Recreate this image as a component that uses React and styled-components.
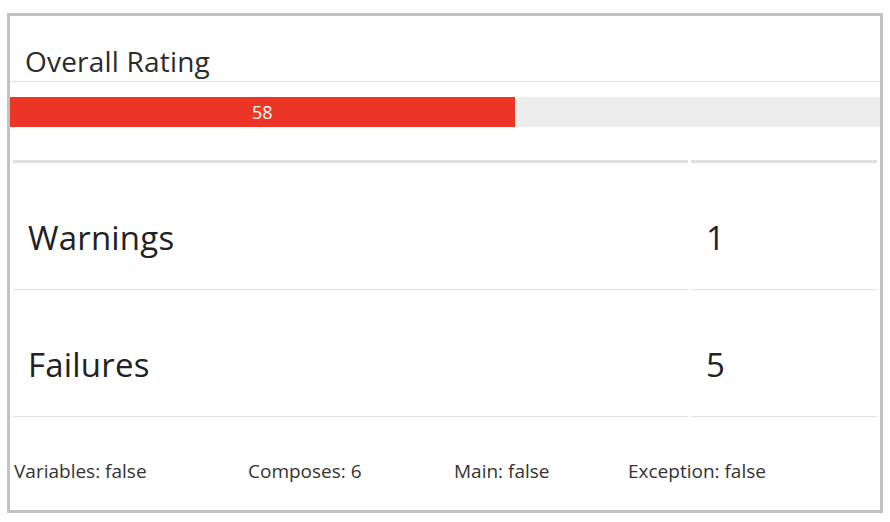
import React from "react";
import styled, { createGlobalStyle } from "styled-components";

const GlobalStyle = createGlobalStyle`
  html, body { margin: 0; padding: 0; background: #ffffff; }
  body { font-family: "Open Sans", "Noto Sans", "Liberation Sans", sans-serif; color: #222; }
`;

const Panel = styled.div`
  box-sizing: border-box;
  margin: 13px 7px 0 7px;
  width: 876px;
  height: 500px;
  border: 3px solid #c2c2c2;
  background: #fff;
  display: flex;
  flex-direction: column;
`;

const Header = styled.div`
  padding: 28px 0 3px 15px;
  border-bottom: 1px solid #dedede;
`;

const Title = styled.h2`
  margin: 0;
  font-size: 28px;
  line-height: 34px;
  font-weight: 400;
  letter-spacing: 0.2px;
  color: #2b2b2b;
`;

const Track = styled.div`
  margin-top: 15px;
  height: 30px;
  background: #ededed;
  display: flex;
`;

const Fill = styled.div`
  height: 100%;
  background: #eb3526;
  color: #fff;
  font-size: 18px;
  line-height: 30px;
  text-align: center;
`;

const Table = styled.div`
  margin-top: 33px;
  padding: 0 3px;
  display: grid;
  grid-template-columns: 675px 186px;
  column-gap: 3px;
`;

const HeadCell = styled.div`
  height: 0;
  border-bottom: 3px solid #dfdfdf;
`;

const Cell = styled.div`
  box-sizing: border-box;
  height: 127px;
  border-bottom: 1px solid #e2e2e2;
  display: flex;
  align-items: center;
  padding: 22px 0 0 15px;
  font-size: 33px;
  letter-spacing: 0.2px;
  color: #222;
`;

const Footer = styled.div`
  display: flex;
  padding: 42px 0 0 4px;
  font-size: 19px;
  line-height: 24px;
  color: #333;
`;

const FooterItem = styled.span`
  width: ${(p) => p.$w}px;
  flex: none;
  white-space: nowrap;
`;

const rating = 58;

const rows = [
  { label: "Warnings", value: 1 },
  { label: "Failures", value: 5 },
];

const footer = [
  { text: "Variables: false", w: 234 },
  { text: "Composes: 6", w: 206 },
  { text: "Main: false", w: 174 },
  { text: "Exception: false", w: 200 },
];

export default function App() {
  return (
    <>
      <GlobalStyle />
      <Panel>
        <Header>
          <Title>Overall Rating</Title>
        </Header>
        <Track>
          <Fill style={{ width: `${rating}%` }}>{rating}</Fill>
        </Track>
        <Table>
          <HeadCell />
          <HeadCell />
          {rows.map((r) => (
            <React.Fragment key={r.label}>
              <Cell>{r.label}</Cell>
              <Cell>{r.value}</Cell>
            </React.Fragment>
          ))}
        </Table>
        <Footer>
          {footer.map((f) => (
            <FooterItem key={f.text} $w={f.w}>
              {f.text}
            </FooterItem>
          ))}
        </Footer>
      </Panel>
    </>
  );
}
